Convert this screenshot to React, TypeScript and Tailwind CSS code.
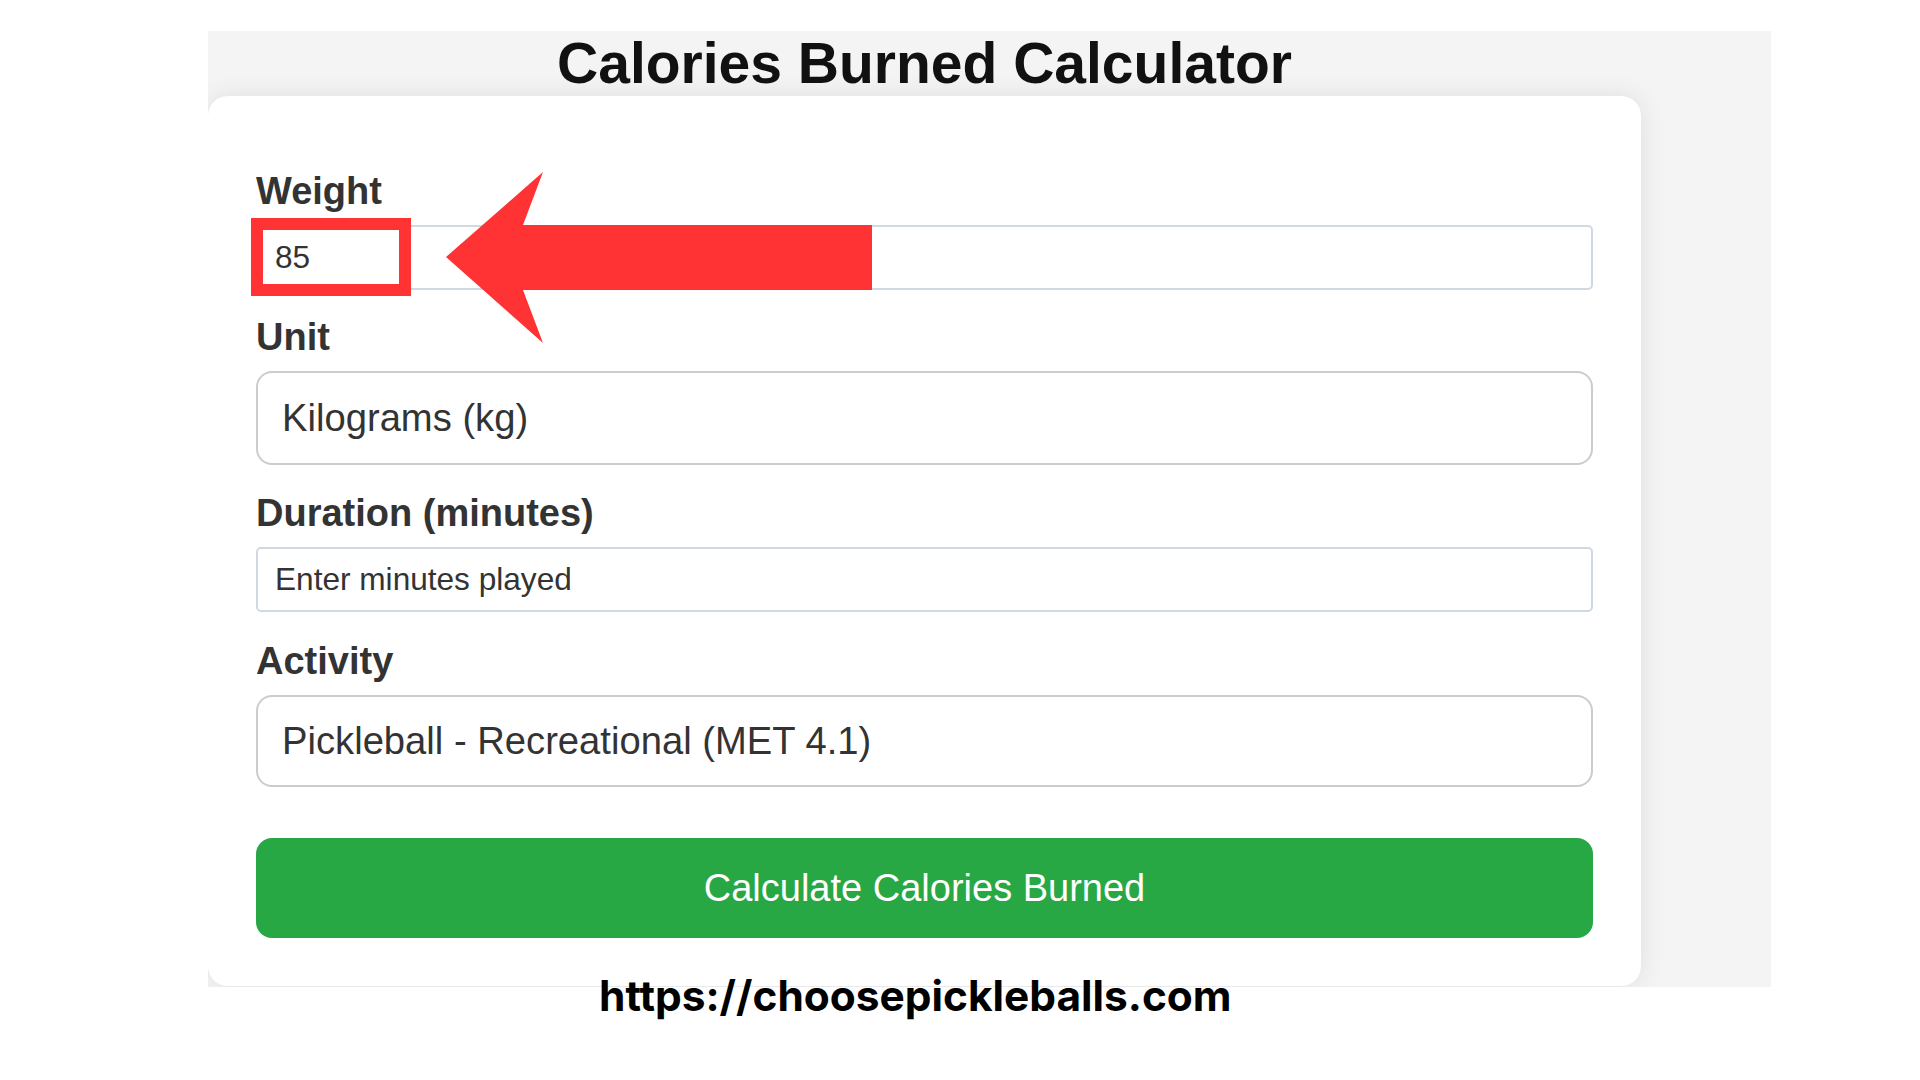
import React from 'react';

// Field label shared by every row of the form
function FieldLabel({ children }: { children: React.ReactNode }) {
  return (
    <label className="block mb-[15px] text-[38px] leading-none font-bold text-[#333]">
      {children}
    </label>
  );
}

function TextBox({ value, placeholder }: { value?: string; placeholder?: string }) {
  return (
    <input
      readOnly
      value={value ?? ''}
      placeholder={placeholder}
      className="block w-full h-[65px] px-[17px] bg-white border-2 border-[#cfd8e3] rounded-[5px] text-[31.6px] text-[#333] placeholder:text-[#333] outline-none"
    />
  );
}

function SelectBox({ children, tall = 94 }: { children: React.ReactNode; tall?: number }) {
  return (
    <div
      className="flex items-center w-full px-[24px] bg-white border-2 border-[#cccccc] rounded-[16px] text-[38.2px] text-[#333]"
      style={{ height: tall }}
    >
      {children}
    </div>
  );
}

export default function App() {
  return (
    <div className="relative w-[1920px] h-[1080px] bg-white pt-[31px] pl-[208px] font-['Liberation_Sans',Arial,sans-serif] overflow-hidden">
      {/* cropped page screenshot */}
      <div className="w-[1563px] h-[956px] bg-[#f4f4f4] overflow-hidden">
        <h1 className="w-[1433px] pt-[4px] text-center text-[57px] leading-none font-bold text-[#111]">
          Calories Burned Calculator
        </h1>

        <div className="mt-[4px] w-[1433px] h-[890px] bg-white rounded-[20px] shadow-[0_0_26px_rgba(0,0,0,0.09)] px-[48px] pt-[76px]">
          <FieldLabel>Weight</FieldLabel>
          <TextBox value="85" />

          <div className="mt-[28px]">
            <FieldLabel>Unit</FieldLabel>
            <SelectBox>Kilograms (kg)</SelectBox>
          </div>

          <div className="mt-[29px]">
            <FieldLabel>Duration (minutes)</FieldLabel>
            <TextBox placeholder="Enter minutes played" />
          </div>

          <div className="mt-[30px]">
            <FieldLabel>Activity</FieldLabel>
            <SelectBox tall={92}>Pickleball - Recreational (MET 4.1)</SelectBox>
          </div>

          <button className="mt-[51px] w-full h-[100px] bg-[#28a745] rounded-[16px] text-[38px] text-white">
            Calculate Calories Burned
          </button>
        </div>
      </div>

      {/* annotation: red frame around the weight value */}
      <div className="absolute left-[251px] top-[218px] w-[160px] h-[78px] border-[12px] border-[#ff3333]" />

      {/* annotation: arrow pointing at it */}
      <svg className="absolute left-[446px] top-[172px]" width="426" height="171" viewBox="0 0 426 171">
        <polygon points="0,85 97,0 77,53 426,53 426,118 77,118 97,171" fill="#ff3333" />
      </svg>

      <div className="absolute left-[599px] top-[975px] text-[42.4px] leading-none font-bold text-black font-['Inter',sans-serif]">
        https://choosepickleballs.com
      </div>
    </div>
  );
}
